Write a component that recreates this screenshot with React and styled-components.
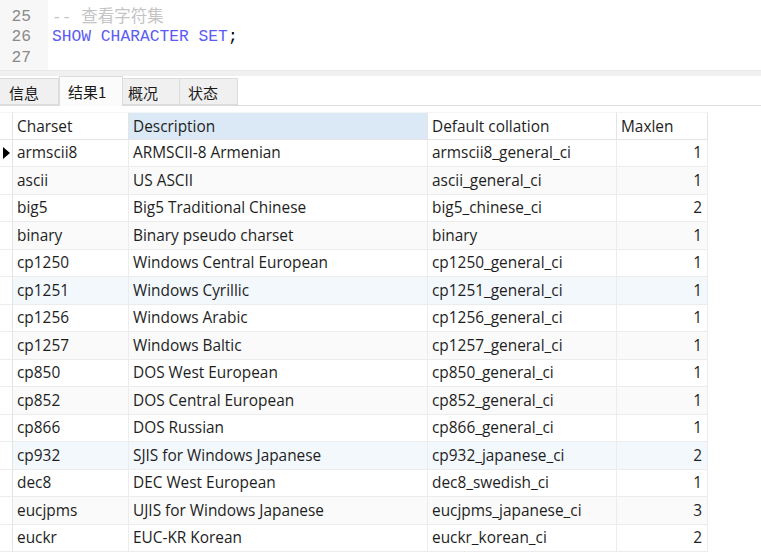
import React from "react";
import styled, { createGlobalStyle } from "styled-components";

const Global = createGlobalStyle`
  html, body { margin: 0; padding: 0; background: #ffffff; }
  body { width: 761px; height: 557px; overflow: hidden; }
`;

const Page = styled.div`
  width: 761px;
  height: 557px;
  display: flex;
  flex-direction: column;
  background: #fff;
  overflow: hidden;
`;

const Editor = styled.div`
  height: 70px;
  display: flex;
  overflow: hidden;
  flex-shrink: 0;
`;

const Gutter = styled.div`
  width: 48px;
  background: #f7f7f7;
  display: flex;
  flex-direction: column;
  margin-top: -14px;
  padding-right: 17px;
  box-sizing: border-box;
`;

const Code = styled.div`
  flex: 1;
  display: flex;
  flex-direction: column;
  margin-top: -14px;
  padding-left: 4px;
`;

const Line = styled.div`
  height: 20.5px;
  line-height: 20.5px;
  flex-shrink: 0;
  font-family: "Liberation Mono", "Noto Sans CJK SC", monospace;
  font-size: 16.3px;
  white-space: pre;
  color: ${(p) => p.$color || "#000"};
  text-align: ${(p) => (p.$right ? "right" : "left")};
`;

const Comment = styled.span`
  color: #c4c4c4;
`;
const Cjk = styled.span`
  font-family: "Noto Sans CJK SC", sans-serif;
  font-size: 16.5px;
  line-height: 1;
`;
const Kw = styled.span`
  color: #5b5bf5;
`;

const Separator = styled.div`
  height: 5px;
  background: #f0f0f0;
  border-top: 1px solid #e8e8e8;
  flex-shrink: 0;
`;

const TabBar = styled.div`
  display: flex;
  align-items: flex-end;
  height: 29px;
  border-bottom: 1px solid #dcdcdc;
  flex-shrink: 0;
`;

const Tab = styled.div`
  height: ${(p) => (p.$active ? "30px" : "27px")};
  margin-bottom: ${(p) => (p.$active ? "-1px" : "0")};
  width: ${(p) => p.$w}px;
  box-sizing: border-box;
  background: ${(p) => (p.$active ? "#fbfbfb" : "#f0f0f0")};
  border: 1px solid #dcdcdc;
  border-bottom: ${(p) => (p.$active ? "none" : "1px solid #dcdcdc")};
  border-left: ${(p) => (p.$noLeft ? "none" : "1px solid #dcdcdc")};
  display: flex;
  align-items: center;
  padding-left: ${(p) => p.$pl}px;
  font-family: "Noto Sans CJK SC", sans-serif;
  font-size: 15px;
  color: #1a1a1a;
  padding-top: ${(p) => (p.$active ? "0" : "2px")};
`;

const Grid = styled.div`
  margin-top: 6px;
  display: grid;
  grid-template-columns: 13px 116px 299px 189px 91px;
  grid-auto-rows: 27.5px;
  width: 708px;
  font-family: "Open Sans", "Noto Sans CJK SC", sans-serif;
  font-size: 15.4px;
  color: #1e1e1e;
`;

const HeadCell = styled.div`
  height: 28px;
  box-sizing: border-box;
  display: flex;
  align-items: center;
  padding-left: 4px;
  background: ${(p) => (p.$sel ? "#dbe9f6" : "#ffffff")};
  border-right: 1px solid #e4e4e4;
  border-bottom: 1px solid #e4e4e4;
  border-top: 1px solid #f4f4f4;
`;

const Cell = styled.div`
  box-sizing: border-box;
  display: flex;
  align-items: center;
  justify-content: ${(p) => (p.$right ? "flex-end" : "flex-start")};
  padding: 0 ${(p) => (p.$right ? "5px" : "0")} 0 ${(p) => (p.$right ? "0" : "4px")};
  background: ${(p) => p.$bg};
  border-right: 1px solid #ececec;
  border-bottom: 1px solid #ececec;
  white-space: nowrap;
`;

const Indicator = styled.div`
  box-sizing: border-box;
  display: flex;
  align-items: center;
  justify-content: center;
  border-right: 1px solid #e4e4e4;
  border-bottom: 1px solid #ececec;
  background: #fff;
`;

const Arrow = () => (
  <svg width="7" height="12" viewBox="0 0 7 12">
    <path d="M0 0 L7 6 L0 12 Z" fill="#000" />
  </svg>
);

const rows = [
  ["armscii8", "ARMSCII-8 Armenian", "armscii8_general_ci", 1],
  ["ascii", "US ASCII", "ascii_general_ci", 1],
  ["big5", "Big5 Traditional Chinese", "big5_chinese_ci", 2],
  ["binary", "Binary pseudo charset", "binary", 1],
  ["cp1250", "Windows Central European", "cp1250_general_ci", 1],
  ["cp1251", "Windows Cyrillic", "cp1251_general_ci", 1],
  ["cp1256", "Windows Arabic", "cp1256_general_ci", 1],
  ["cp1257", "Windows Baltic", "cp1257_general_ci", 1],
  ["cp850", "DOS West European", "cp850_general_ci", 1],
  ["cp852", "DOS Central European", "cp852_general_ci", 1],
  ["cp866", "DOS Russian", "cp866_general_ci", 1],
  ["cp932", "SJIS for Windows Japanese", "cp932_japanese_ci", 2],
  ["dec8", "DEC West European", "dec8_swedish_ci", 1],
  ["eucjpms", "UJIS for Windows Japanese", "eucjpms_japanese_ci", 3],
  ["euckr", "EUC-KR Korean", "euckr_korean_ci", 2],
];

const rowBg = (i) => {
  if (i === 5 || i === 11) return "#f3f8fd";
  if (i % 2 === 0) return "#ffffff";
  return "#fafafa";
};

export default function App() {
  return (
    <Page>
      <Global />
      <Editor>
        <Gutter>
          <Line $color="#8a8a8a" $right>24</Line>
          <Line $color="#8a8a8a" $right>25</Line>
          <Line $color="#8a8a8a" $right>26</Line>
          <Line $color="#8a8a8a" $right>27</Line>
        </Gutter>
        <Code>
          <Line> </Line>
          <Line>
            <Comment>
              -- <Cjk>查看字符集</Cjk>
            </Comment>
          </Line>
          <Line>
            <Kw>SHOW CHARACTER SET</Kw>;
          </Line>
          <Line> </Line>
        </Code>
      </Editor>
      <Separator />
      <TabBar>
        <Tab $w={59} $pl={9} $noLeft>信息</Tab>
        <Tab $w={64} $pl={8} $active>结果1</Tab>
        <Tab $w={57} $pl={5} $noLeft>概况</Tab>
        <Tab $w={58} $pl={8} $noLeft>状态</Tab>
      </TabBar>
      <Grid>
        <HeadCell />
        <HeadCell>Charset</HeadCell>
        <HeadCell $sel>Description</HeadCell>
        <HeadCell>Default collation</HeadCell>
        <HeadCell>Maxlen</HeadCell>
        {rows.map((r, i) => (
          <React.Fragment key={r[0]}>
            <Indicator>{i === 0 ? <Arrow /> : null}</Indicator>
            <Cell $bg={rowBg(i)}>{r[0]}</Cell>
            <Cell $bg={rowBg(i)}>{r[1]}</Cell>
            <Cell $bg={rowBg(i)}>{r[2]}</Cell>
            <Cell $bg={rowBg(i)} $right>{r[3]}</Cell>
          </React.Fragment>
        ))}
      </Grid>
    </Page>
  );
}
